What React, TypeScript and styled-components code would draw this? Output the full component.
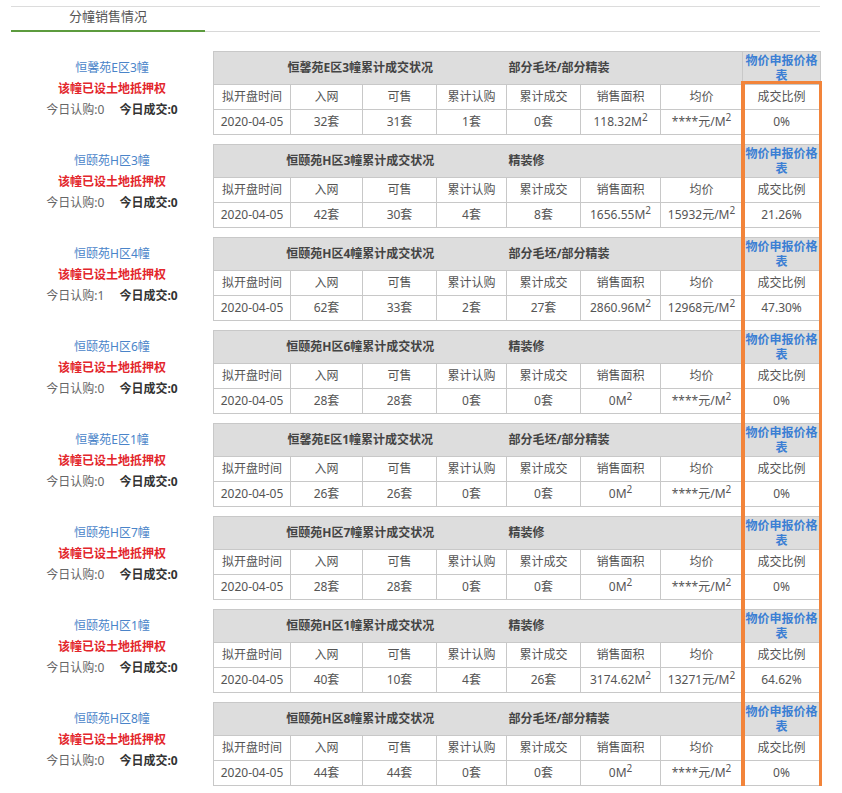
import React from "react";
import styled, { createGlobalStyle } from "styled-components";

const Global = createGlobalStyle`
  html, body { margin: 0; padding: 0; overflow: hidden; background: #fff; }
  body { font-family: "Noto Sans", "Noto Sans CJK SC", sans-serif; }
`;

const Page = styled.div`
  position: relative;
  width: 809px;
  margin-left: 11px;
  padding-top: 6px;
`;

const TopRule = styled.div`
  border-top: 1px solid #dcdcdc;
`;

const TabBar = styled.div`
  display: flex;
  height: 24px;
  border-bottom: 1px solid #d8d8d8;
`;

const Tab = styled.div`
  width: 194px;
  height: 23px;
  border-bottom: 2px solid #5c9b3e;
  font-size: 13px;
  line-height: 18px;
  color: #555;
  text-align: center;
`;

const List = styled.div`
  display: flex;
  flex-direction: column;
  gap: 9px;
  margin-top: 19px;
`;

const Row = styled.div`
  display: grid;
  grid-template-columns: 202px 607px;
`;

const Info = styled.div`
  display: flex;
  flex-direction: column;
  align-items: center;
  padding-top: 6px;
  font-size: 12px;
  line-height: 21px;
`;

const Name = styled.div`
  color: #4a84c9;
`;

const Warn = styled.div`
  color: #e3262c;
  font-weight: bold;
`;

const Stats = styled.div`
  display: flex;
  gap: 15px;
  color: #666;
`;

const Strong = styled.span`
  color: #333;
  font-weight: bold;
`;

const Table = styled.table`
  width: 607px;
  border-collapse: collapse;
  table-layout: fixed;
  font-size: 12px;
  color: #555;
`;

const Tr = styled.tr<{ $h: number }>`
  height: ${(p) => p.$h}px;
`;

const Td = styled.td`
  border: 1px solid #c8c8c8;
  text-align: center;
  padding: 0 2px;
  line-height: 16px;
  white-space: nowrap;
`;

const TitleTd = styled(Td)`
  background: #dddddd;
  font-weight: bold;
  color: #444;
  border-right: none;
`;

const FinishTd = styled(Td)`
  background: #dddddd;
  font-weight: bold;
  color: #444;
  text-align: left;
  padding-left: 2px;
  border-left: none;
`;

const LinkTd = styled(Td)`
  background: #dddddd;
  font-weight: bold;
  color: #3b7fd4;
  white-space: normal;
  line-height: 15px;
  padding: 1px 2px;
`;

const Sup = styled.sup`
  font-size: 10px;
  line-height: 0;
  vertical-align: 5px;
`;

const Highlight = styled.div`
  position: absolute;
  left: 730px;
  top: 81px;
  width: 74px;
  height: 760px;
  border: 3px solid #f2843a;
  border-left-width: 4px;
  border-bottom: none;
  pointer-events: none;
`;

type Item = {
  name: string;
  finish: string;
  buy: number;
  n: number[];
  area: string;
  price: string;
  ratio: string;
};

const items: Item[] = [
  { name: "恒馨苑E区3幢", finish: "部分毛坯/部分精装", buy: 0, n: [32, 31, 1, 0], area: "118.32", price: "****", ratio: "0%" },
  { name: "恒颐苑H区3幢", finish: "精装修", buy: 0, n: [42, 30, 4, 8], area: "1656.55", price: "15932", ratio: "21.26%" },
  { name: "恒颐苑H区4幢", finish: "部分毛坯/部分精装", buy: 1, n: [62, 33, 2, 27], area: "2860.96", price: "12968", ratio: "47.30%" },
  { name: "恒颐苑H区6幢", finish: "精装修", buy: 0, n: [28, 28, 0, 0], area: "0", price: "****", ratio: "0%" },
  { name: "恒馨苑E区1幢", finish: "部分毛坯/部分精装", buy: 0, n: [26, 26, 0, 0], area: "0", price: "****", ratio: "0%" },
  { name: "恒颐苑H区7幢", finish: "精装修", buy: 0, n: [28, 28, 0, 0], area: "0", price: "****", ratio: "0%" },
  { name: "恒颐苑H区1幢", finish: "精装修", buy: 0, n: [40, 10, 4, 26], area: "3174.62", price: "13271", ratio: "64.62%" },
  { name: "恒颐苑H区8幢", finish: "部分毛坯/部分精装", buy: 0, n: [44, 44, 0, 0], area: "0", price: "****", ratio: "0%" },
];

const widths = [77, 72, 74, 70, 74, 80, 82, 78];
const labels = ["拟开盘时间", "入网", "可售", "累计认购", "累计成交", "销售面积", "均价", "成交比例"];

function Block({ it }: { it: Item }) {
  return (
    <Row>
      <Info>
        <Name>{it.name}</Name>
        <Warn>该幢已设土地抵押权</Warn>
        <Stats>
          <span>今日认购:{it.buy}</span>
          <Strong>今日成交:0</Strong>
        </Stats>
      </Info>
      <Table>
        <colgroup>
          {widths.map((w, i) => (
            <col key={i} style={{ width: w }} />
          ))}
        </colgroup>
        <tbody>
          <Tr $h={33}>
            <TitleTd colSpan={4}>{it.name}累计成交状况</TitleTd>
            <FinishTd colSpan={3}>{it.finish}</FinishTd>
            <LinkTd>物价申报价格表</LinkTd>
          </Tr>
          <Tr $h={25}>
            {labels.map((l) => (
              <Td key={l}>{l}</Td>
            ))}
          </Tr>
          <Tr $h={25}>
            <Td>2020-04-05</Td>
            {it.n.map((v, i) => (
              <Td key={i}>{v}套</Td>
            ))}
            <Td>
              {it.area}M<Sup>2</Sup>
            </Td>
            <Td>
              {it.price}元/M<Sup>2</Sup>
            </Td>
            <Td>{it.ratio}</Td>
          </Tr>
        </tbody>
      </Table>
    </Row>
  );
}

export default function App() {
  return (
    <>
      <Global />
      <Page>
        <TopRule />
        <TabBar>
          <Tab>分幢销售情况</Tab>
        </TabBar>
        <List>
          {items.map((it) => (
            <Block key={it.name} it={it} />
          ))}
        </List>
        <Highlight />
      </Page>
    </>
  );
}
